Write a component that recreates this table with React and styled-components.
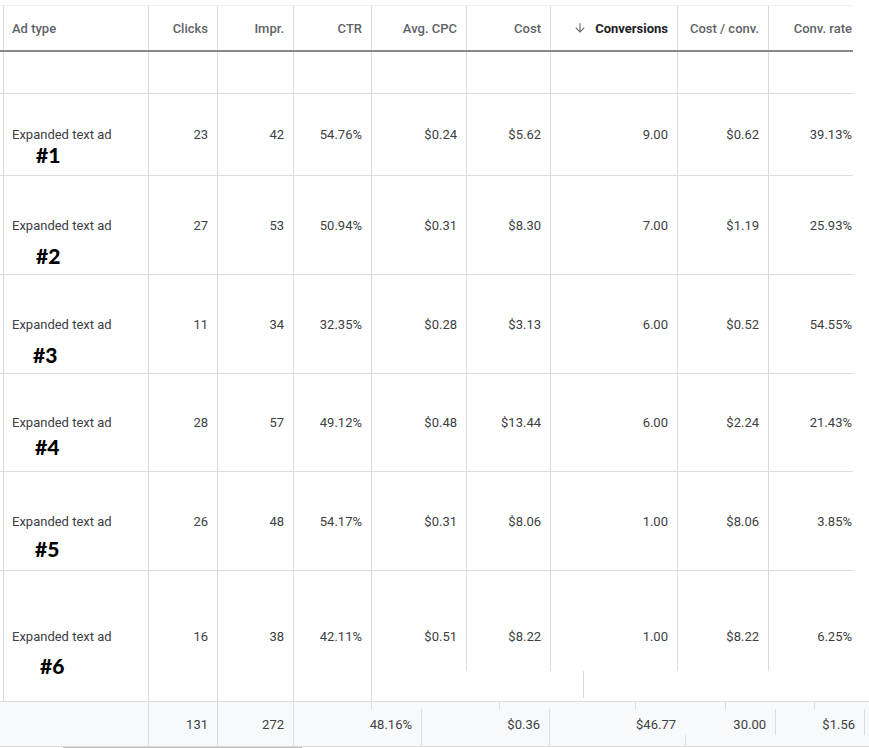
import React from "react";
import styled, { createGlobalStyle } from "styled-components";

const LINE = "#dadce0";
const COLS = "3px 145px 69px 76px 78px 95px 84px 127px 91px 85px";

// one vertical rule, drawn as a background layer so cells can cut it short
const rule = (top = 0, bottom = 0, x = 0) =>
  `linear-gradient(${LINE}, ${LINE}) ${x}px ${top}px / 1px calc(100% - ${top + bottom}px) no-repeat`;

const GlobalStyle = createGlobalStyle`
  body {
    margin: 0;
    background: #fff;
    font-family: Roboto, "Liberation Sans", sans-serif;
    overflow: hidden;
  }
`;

const Page = styled.div`
  width: 869px;
  height: 748px;
  padding-top: 5px;
  box-sizing: border-box;
  overflow: hidden;
`;

const Table = styled.div`
  width: 853px;
`;

const HeaderRow = styled.div`
  display: grid;
  grid-template-columns: ${COLS};
  height: 47px;
  box-sizing: border-box;
  border-top: 1px solid #ededed;
  border-bottom: 2px solid #86898d;
`;

const HeadCell = styled.div`
  display: flex;
  align-items: center;
  justify-content: ${(p) => (p.$left ? "flex-start" : "flex-end")};
  gap: 8px;
  padding: 0 ${(p) => p.$pr ?? 9}px 0 ${(p) => (p.$left ? 9 : 0)}px;
  font-size: 13px;
  font-weight: ${(p) => (p.$active ? 700 : 500)};
  color: ${(p) => (p.$active ? "#202124" : "#5f6368")};
  white-space: nowrap;
  overflow: hidden;
  background: ${rule()};
`;

const Row = styled.div`
  display: grid;
  grid-template-columns: ${COLS};
  height: ${(p) => p.$h}px;
  box-sizing: border-box;
  border-bottom: ${(p) => (p.$open ? "none" : `1px solid ${LINE}`)};
`;

const Cell = styled.div`
  position: relative;
  display: flex;
  align-items: center;
  justify-content: ${(p) => (p.$left ? "flex-start" : "flex-end")};
  padding: 0 ${(p) => p.$pr ?? 9}px 0 ${(p) => (p.$left ? 9 : 0)}px;
  font-size: 13px;
  color: #3c4043;
  white-space: nowrap;
  background: ${(p) => p.$bg || rule()};
`;

const Mark = styled.span`
  position: absolute;
  left: ${(p) => p.$x}px;
  top: ${(p) => p.$y}px;
  font-family: Lato, "Open Sans", sans-serif;
  font-weight: 900;
  font-size: 21px;
  line-height: 21px;
  color: #000;
`;

const Totals = styled.div`
  width: 869px;
  background: #f8f9fa;
  border-top: 1px solid ${LINE};
  border-bottom: 1px solid ${LINE};
`;

const TickStrip = styled.div`
  display: flex;
  height: 7px;
`;

const Tick = styled.div`
  flex: none;
  width: ${(p) => p.$w}px;
  background: ${(p) => (p.$plain ? "none" : rule())};
`;

const TotalsLine = styled.div`
  display: flex;
  height: 37px;
`;

const TotalCell = styled.div`
  flex: none;
  width: ${(p) => p.$w}px;
  box-sizing: border-box;
  display: flex;
  align-items: center;
  justify-content: flex-end;
  padding: 0 9px 6px 0;
  font-size: 13px;
  color: #3c4043;
  background: ${(p) => p.$bg || "none"};
`;

const Scrollbar = styled.div`
  padding-left: 63px;
`;

const Thumb = styled.div`
  width: 239px;
  height: 6px;
  background: #bdbdbd;
`;

const SortArrow = () => (
  <svg width="14" height="14" viewBox="0 0 24 24">
    <path
      d="M12.9 4h-1.8v12.6l-5.7-5.7L4.1 12.2 12 20l7.9-7.8-1.3-1.3-5.7 5.7z"
      fill="#5f6368"
    />
  </svg>
);

const columns = [
  "Clicks",
  "Impr.",
  "CTR",
  "Avg. CPC",
  "Cost",
  "Conversions",
  "Cost / conv.",
  "Conv. rate",
];

const rows = [
  { h: 82, mark: "#1", mx: 33, my: 50, v: ["23", "42", "54.76%", "$0.24", "$5.62", "9.00", "$0.62", "39.13%"] },
  { h: 99, mark: "#2", mx: 33, my: 69, v: ["27", "53", "50.94%", "$0.31", "$8.30", "7.00", "$1.19", "25.93%"] },
  { h: 99, mark: "#3", mx: 30, my: 69, v: ["11", "34", "32.35%", "$0.28", "$3.13", "6.00", "$0.52", "54.55%"] },
  { h: 98, mark: "#4", mx: 32, my: 62, v: ["28", "57", "49.12%", "$0.48", "$13.44", "6.00", "$2.24", "21.43%"] },
  { h: 99, mark: "#5", mx: 32, my: 66, v: ["26", "48", "54.17%", "$0.31", "$8.06", "1.00", "$8.06", "3.85%"] },
  { h: 130, mark: "#6", mx: 37, my: 84, v: ["16", "38", "42.11%", "$0.51", "$8.22", "1.00", "$8.22", "6.25%"] },
];

// the last row's rules stop short where the grid was caught mid-scroll
const lastRowRules = [
  rule(),
  rule(),
  rule(),
  rule(),
  rule(),
  rule(0, 30),
  `${rule(0, 30)}, ${rule(100, 3, 33)}`,
  rule(0, 30),
  rule(0, 30),
];

const ticks = [148, 69, 76, 78, 128, 136, 90, 89, 55];

const totals = [
  { w: 148, plain: true },
  { w: 69, text: "131" },
  { w: 76, text: "272" },
  { w: 128, text: "48.16%" },
  { w: 128, text: "$0.36" },
  { w: 136, text: "$46.77" },
  { w: 90, text: "30.00", bg: rule(26, 0) },
  { w: 89, text: "$1.56", bg: rule(0, 11) },
  { w: 5, bg: rule(0, 11) },
];

function App() {
  return (
    <Page>
      <GlobalStyle />
      <Table>
        <HeaderRow>
          <div />
          <HeadCell $left>Ad type</HeadCell>
          {columns.map((c, i) => (
            <HeadCell
              key={c}
              $active={c === "Conversions"}
              $pr={i === columns.length - 1 ? 1 : 9}
            >
              {c === "Conversions" && <SortArrow />}
              {c}
            </HeadCell>
          ))}
        </HeaderRow>

        <Row $h={42}>
          <div />
          {Array.from({ length: 9 }).map((_, i) => (
            <Cell key={i} />
          ))}
        </Row>

        {rows.map((r, ri) => {
          const last = ri === rows.length - 1;
          return (
            <Row key={r.mark} $h={r.h} $open={last}>
              <div />
              <Cell $left $bg={last ? lastRowRules[0] : undefined}>
                Expanded text ad
                <Mark $x={r.mx} $y={r.my}>
                  {r.mark}
                </Mark>
              </Cell>
              {r.v.map((val, i) => (
                <Cell
                  key={i}
                  $pr={i === r.v.length - 1 ? 1 : 9}
                  $bg={last ? lastRowRules[i + 1] : undefined}
                >
                  {val}
                </Cell>
              ))}
            </Row>
          );
        })}
      </Table>

      <Totals>
        <TickStrip>
          {ticks.map((w, i) => (
            <Tick key={i} $w={w} $plain={i === 0} />
          ))}
        </TickStrip>
        <TotalsLine>
          {totals.map((t, i) => (
            <TotalCell
              key={i}
              $w={t.w}
              $bg={t.plain ? "none" : t.bg || rule()}
            >
              {t.text}
            </TotalCell>
          ))}
        </TotalsLine>
      </Totals>
      <Scrollbar>
        <Thumb />
      </Scrollbar>
    </Page>
  );
}

export default App;
